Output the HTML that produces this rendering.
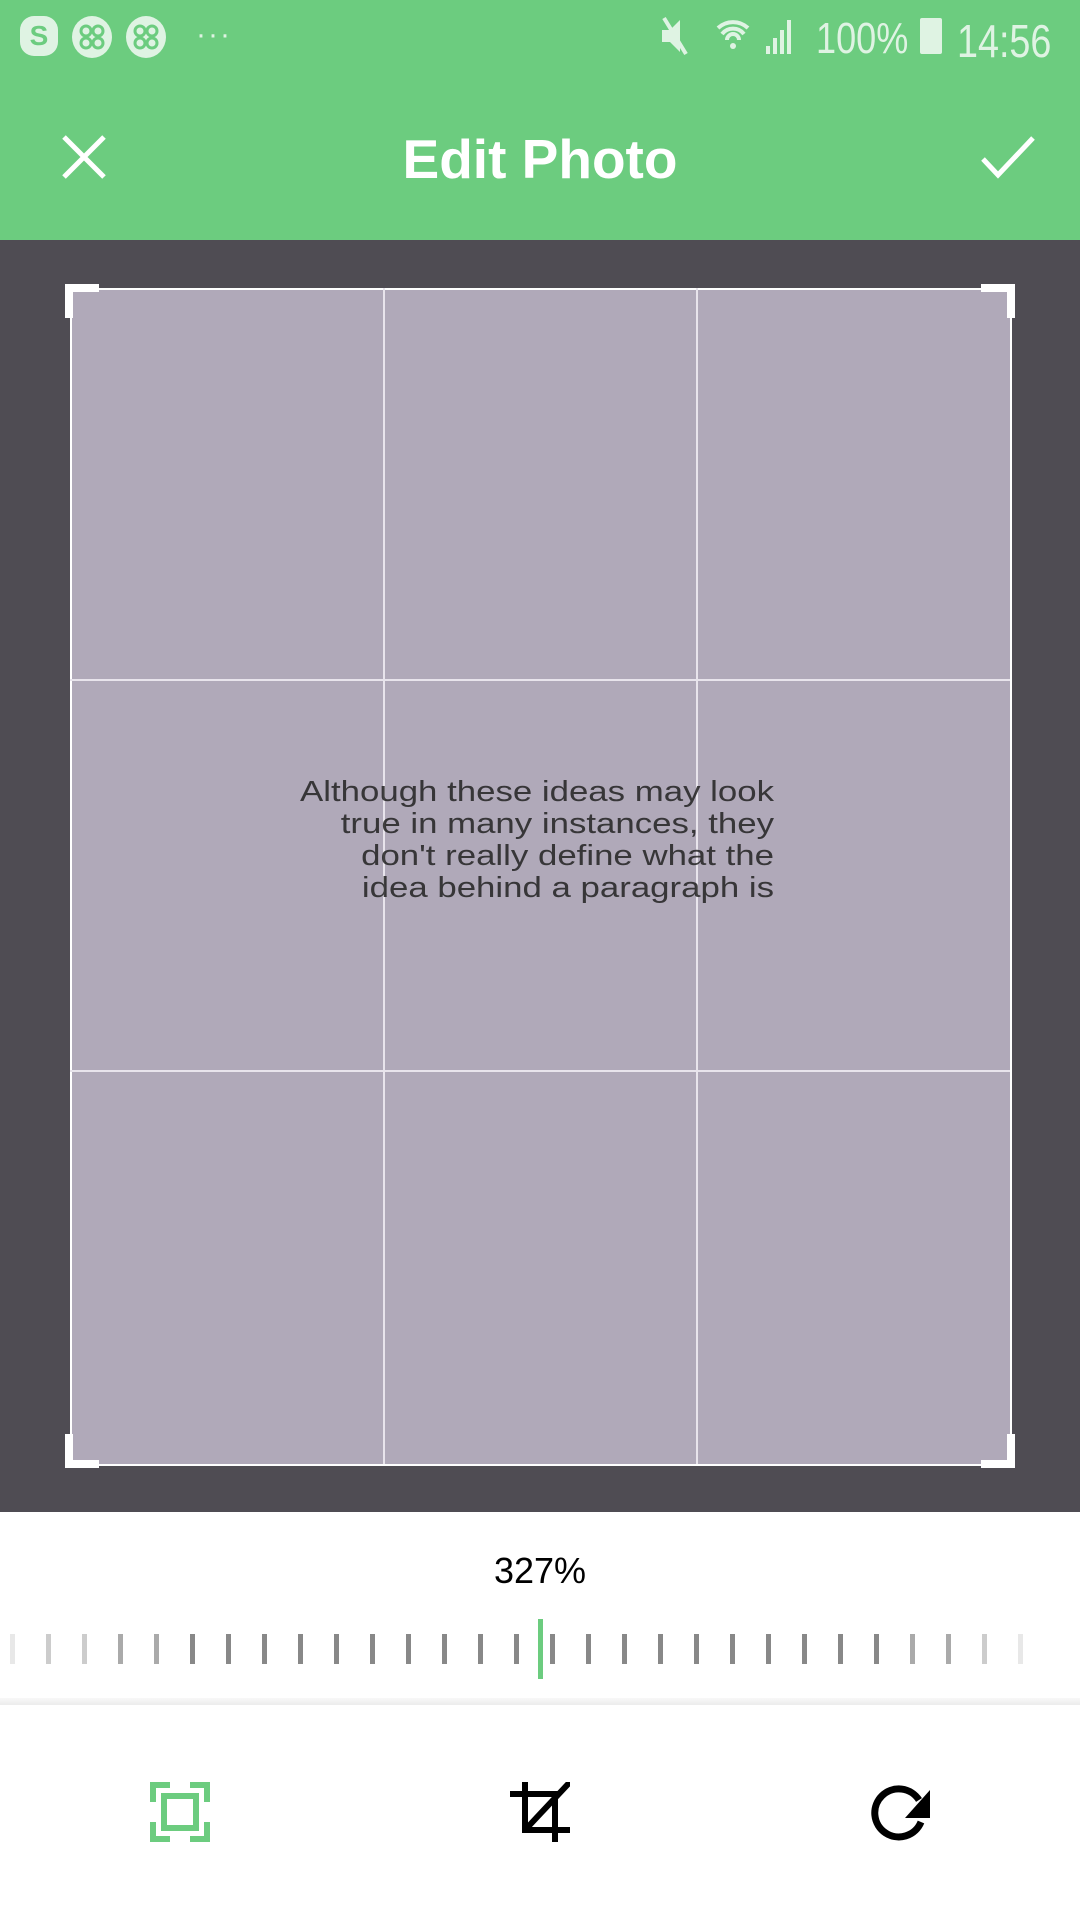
<!DOCTYPE html>
<html><head><meta charset="utf-8"><style>
body{margin:0;width:1080px;height:1920px;position:relative;background:#fff;font-family:"Liberation Sans",sans-serif;overflow:hidden}
.abs{position:absolute}
</style></head><body>
<div class="abs" style="left:0;top:0;width:1080px;height:240px;background:#6ccc7f"></div>
<div class="abs" style="left:20px;top:16px;width:38px;height:40px;border-radius:14px;background:#dff3e3;color:#6ccc7f;font-weight:bold;font-size:28px;text-align:center;line-height:40px">S</div>
<svg class="abs" style="left:72px;top:15px" width="94" height="44"><g fill="#dff3e3"><ellipse cx="20" cy="22" rx="20" ry="21"/><ellipse cx="74" cy="22" rx="20" ry="21"/></g><g stroke="#6ccc7f" stroke-width="3" fill="none"><circle cx="14" cy="16" r="5"/><circle cx="26" cy="16" r="5"/><circle cx="14" cy="28" r="5"/><circle cx="26" cy="28" r="5"/><circle cx="68" cy="16" r="5"/><circle cx="80" cy="16" r="5"/><circle cx="68" cy="28" r="5"/><circle cx="80" cy="28" r="5"/></g></svg>
<div class="abs" style="left:196px;top:18px;color:#dff3e3;font-size:30px;letter-spacing:2px">···</div>
<svg class="abs" style="left:660px;top:16px" width="150" height="40"><g fill="#dff3e3"><path d="M2 14h8l10-10v32l-10-10H2z"/><path d="M4 2l22 36" stroke="#dff3e3" stroke-width="4"/><path d="M58 12a22 22 0 0 1 30 0M62 18a14 14 0 0 1 22 0M67 24a6 6 0 0 1 12 0" stroke="#dff3e3" stroke-width="4" fill="none"/><circle cx="73" cy="30" r="3"/><rect x="106" y="30" width="4" height="8"/><rect x="113" y="22" width="4" height="16"/><rect x="120" y="14" width="4" height="24"/><rect x="127" y="4" width="4" height="34"/></g></svg>
<div class="abs" style="left:816px;top:14px;color:#dff3e3;font-size:44px;transform:scaleX(.82);transform-origin:left">100%</div>
<div class="abs" style="left:920px;top:18px;width:22px;height:36px;background:#dff3e3;border-radius:2px"></div>
<div class="abs" style="left:957px;top:14px;color:#dff3e3;font-size:46px;transform:scaleX(.82);transform-origin:left">14:56</div>
<svg class="abs" style="left:62px;top:135px" width="44" height="44"><path d="M2 2L42 42M42 2L2 42" stroke="#fff" stroke-width="5"/></svg>
<div class="abs" style="left:0;top:127px;width:1080px;text-align:center;color:#fff;font-size:55px;font-weight:bold">Edit Photo</div>
<svg class="abs" style="left:980px;top:135px" width="56" height="44"><path d="M3 24L18 40L53 3" stroke="#fff" stroke-width="5" fill="none"/></svg>
<div class="abs" style="left:0;top:240px;width:1080px;height:1272px;background:#4f4c53"></div>
<div class="abs" style="left:70px;top:288px;width:938px;height:1174px;background:#b0a9b9;border:2px solid #fff"></div>
<div class="abs" style="left:383px;top:288px;width:2px;height:1176px;background:#e8e4ec"></div>
<div class="abs" style="left:696px;top:288px;width:2px;height:1176px;background:#e8e4ec"></div>
<div class="abs" style="left:70px;top:679px;width:940px;height:2px;background:#e8e4ec"></div>
<div class="abs" style="left:70px;top:1070px;width:940px;height:2px;background:#e8e4ec"></div>
<svg class="abs" style="left:0;top:0" width="1080" height="1920"><g stroke="#fff" stroke-width="8" fill="none"><path d="M69 318V288H99"/><path d="M981 288H1011V318"/><path d="M69 1434V1464H99"/><path d="M981 1464H1011V1434"/></g></svg>
<div class="abs" style="left:174px;top:776px;width:600px;text-align:right;color:#222;font-size:29px;line-height:32px;opacity:.85;transform:scaleX(1.2);transform-origin:right">Although these ideas may look<br>true in many instances, they<br>don't really define what the<br>idea behind a paragraph is</div>
<div class="abs" style="left:0;top:1550px;width:1080px;text-align:center;font-size:36px;color:#000">327%</div>
<svg class="abs" style="left:0;top:1610px" width="1080" height="80" id="t"></svg>
<div class="abs" style="left:0;top:1698px;width:1080px;height:7px;background:linear-gradient(#f8f8f8,#ececec)"></div>
<svg class="abs" style="left:150px;top:1782px" width="60" height="60"><g fill="#6ccc7f"><path d="M0 0h20v6H6v14H0z"/><path d="M60 0H40v6h14v14h6z"/><path d="M0 60h20v-6H6V40H0z"/><path d="M60 60H40v-6h14V40h6z"/></g><rect x="14" y="14" width="32" height="32" fill="none" stroke="#6ccc7f" stroke-width="6"/></svg>
<svg class="abs" style="left:510px;top:1782px" width="60" height="60"><g stroke="#000" stroke-width="6" fill="none"><path d="M15 0V48H60"/><path d="M0 12H45V60"/><path d="M15 48L60 0"/></g></svg>
<svg class="abs" style="left:869px;top:1782px" width="62" height="62"><path d="M50 18A24 24 0 1 0 52 40" stroke="#000" stroke-width="7" fill="none"/><path d="M61 8V36H36z" fill="#000"/></svg>
<script>
var s='',g=document.getElementById('t');
for(var i=0;i<=28;i++){var x=10+36*i,d=Math.abs(i-14.2);var c=d<10?'#888':(d<12?'#aaa':(d<13.5?'#ccc':'#e8e8e8'));s+='<rect x="'+x+'" y="24" width="5" height="30" fill="'+c+'"/>';}
s+='<rect x="538" y="9" width="5" height="60" fill="#6ccc7f"/>';g.innerHTML=s;
</script>
</body></html>
